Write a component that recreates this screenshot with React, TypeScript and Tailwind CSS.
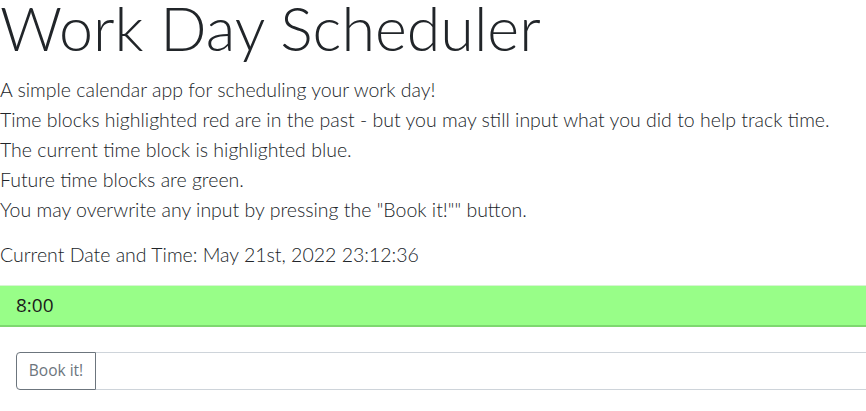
import React from "react";

const lines = [
  "A simple calendar app for scheduling your work day!",
  "Time blocks highlighted red are in the past - but you may still input what you did to help track time.",
  "The current time block is highlighted blue.",
  "Future time blocks are green.",
  'You may overwrite any input by pressing the "Book it!"" button.',
];

export default function App() {
  return (
    <div className="min-h-screen bg-white text-[#212529] font-['Lato',sans-serif] overflow-hidden">
      {/* header */}
      <header>
        <h1 className="text-[61px] font-light leading-[56px] whitespace-nowrap">Work Day Scheduler</h1>
        <div className="text-[19.5px] font-light leading-[30px] mt-[19px]">
          {lines.map((l) => (
            <p key={l} className="whitespace-nowrap">{l}</p>
          ))}
        </div>
        <p className="text-[19.5px] font-light leading-[30px] mt-[15px]">
          Current Date and Time: May 21st, 2022 23:12:36
        </p>
      </header>

      {/* time blocks */}
      <div className="mt-[15px]">
        <div className="h-[42px] bg-[#98fe88] border-t border-[#d7f5d2] border-b-2 border-b-[#7ed870] flex items-center pl-4">
          <span className="text-[19px] font-medium text-[#1b1b1b] font-['Open_Sans',sans-serif]">8:00</span>
        </div>
        <div className="flex mt-[25px] pl-4">
          <button className="h-[38px] w-[80px] border border-[#6c757d] rounded-l-[4px] text-[15.5px] text-[#6c757d] bg-white font-['Open_Sans',sans-serif]">
            Book it!
          </button>
          <input className="flex-1 h-[38px] border-y border-[#ced4da] outline-none" />
        </div>
      </div>
    </div>
  );
}
